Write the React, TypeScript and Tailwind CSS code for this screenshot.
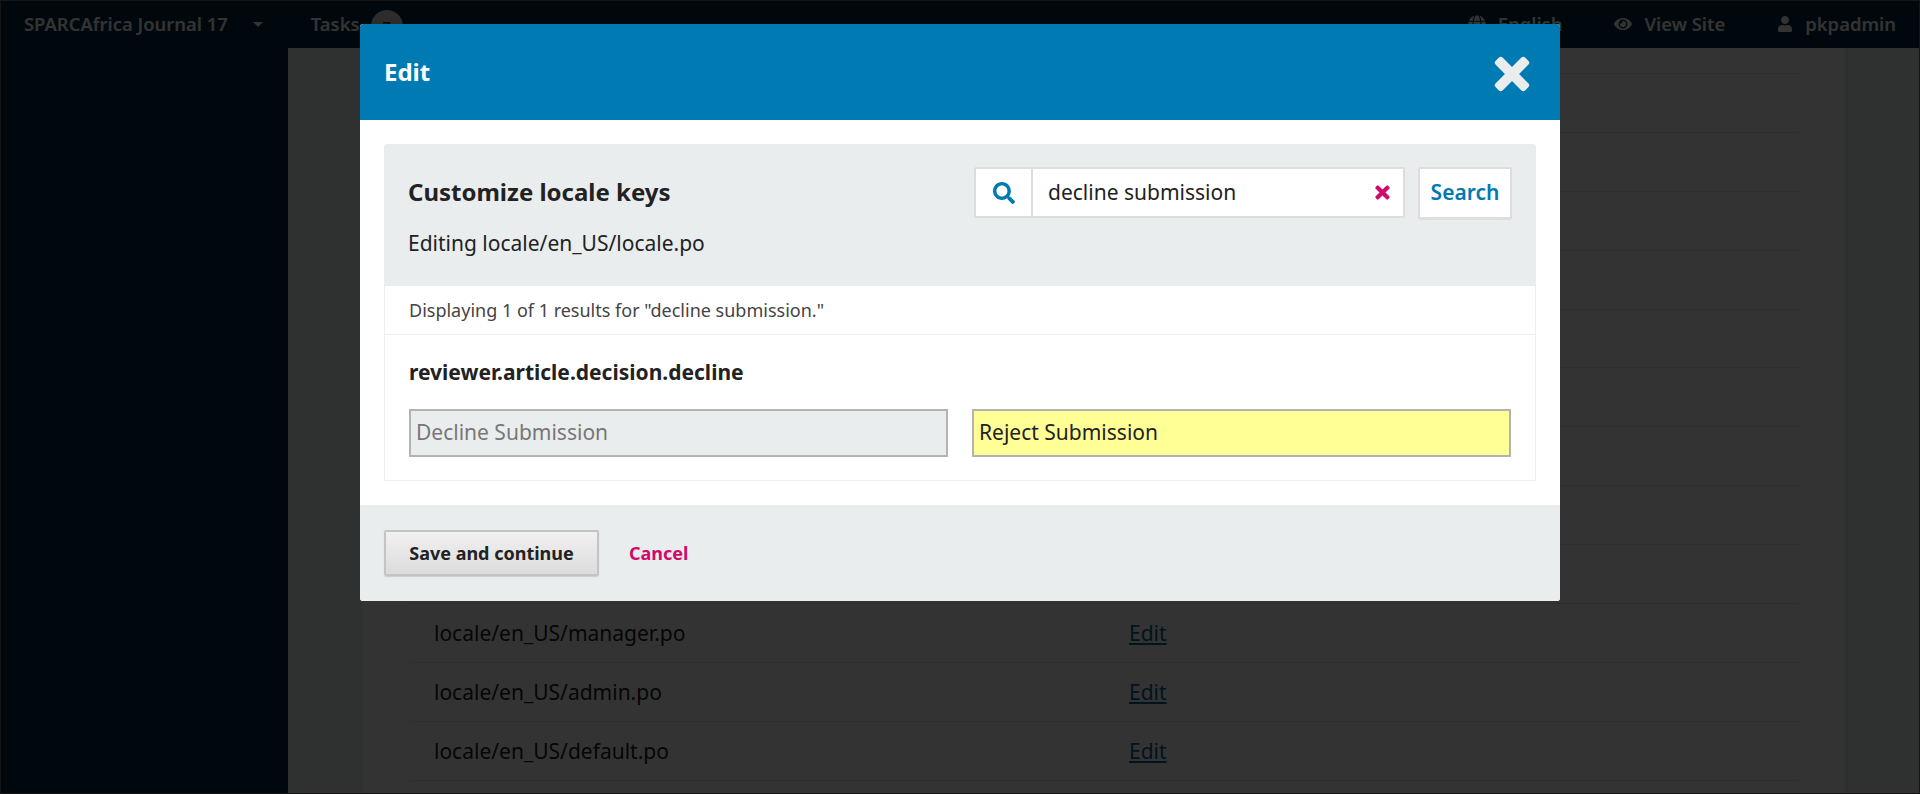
import { FaGlobe, FaEye, FaUser, FaSearch } from "react-icons/fa";

const rows: Record<number, string> = {
  9: "locale/en_US/manager.po",
  10: "locale/en_US/admin.po",
  11: "locale/en_US/default.po",
};

function Times({ className }: { className: string }) {
  return (
    <svg viewBox="0 0 24 24" className={className} fill="currentColor">
      <path d="M4.2 7.6a1.4 1.4 0 0 1 0-2l1.4-1.4a1.4 1.4 0 0 1 2 0L12 8.6l4.4-4.4a1.4 1.4 0 0 1 2 0l1.4 1.4a1.4 1.4 0 0 1 0 2L15.4 12l4.4 4.4a1.4 1.4 0 0 1 0 2l-1.4 1.4a1.4 1.4 0 0 1-2 0L12 15.4l-4.4 4.4a1.4 1.4 0 0 1-2 0l-1.4-1.4a1.4 1.4 0 0 1 0-2L8.6 12z" />
    </svg>
  );
}

export default function App() {
  return (
    <div className="relative h-[794px] w-[1920px] overflow-hidden bg-[#eaedee] font-['Noto_Sans',sans-serif] text-[#222]">
      <header className="flex h-12 items-center bg-[#002c40] pl-6 pr-6 text-[18.4px] font-semibold text-white">
        <span>SPARCAfrica Journal 17</span>
        <span className="ml-[25px] h-0 w-0 border-x-[5px] border-t-[5px] border-x-transparent border-t-white" />
        <span className="ml-[48px]">Tasks</span>
        <span className="ml-[11px] mt-1 flex h-8 w-8 items-center justify-center rounded-full bg-[#ddd] text-[14px] text-[#222]">7</span>
        <FaGlobe className="ml-auto h-[18px] w-[18px]" />
        <span className="ml-3">English</span>
        <FaEye className="ml-[51px] h-[18px] w-[18px]" />
        <span className="ml-[13px]">View Site</span>
        <FaUser className="ml-[52px] h-4 w-4" />
        <span className="ml-3">pkpadmin</span>
      </header>
      <div className="flex h-[746px]">
        <aside className="w-[288px] bg-[#002c40]" />
        <main className="flex-1 overflow-hidden pl-[74px] pr-[73px]">
          <div className="h-full border-r border-[#d8d8d8] bg-white pl-12 pr-[47px] pt-[25px]">
            <div className="border-t border-[#e6e6e6]">
              {Array.from({ length: 12 }).map((_, i) => (
                <div key={i} className="flex h-[58.9px] items-center border-b border-[#e6e6e6] px-6 pt-[2px]">
                  {rows[i] && <span className="w-[695px] text-[21px]">{rows[i]}</span>}
                  {rows[i] && <a className="text-[21px] text-[#006798] underline">Edit</a>}
                </div>
              ))}
            </div>
          </div>
        </main>
      </div>

      <div className="absolute inset-0 border border-[#151515] bg-black/80" />

      <div className="absolute left-[360px] top-6 w-[1200px] overflow-hidden rounded-[3px] bg-white">
        <div className="flex h-24 items-center justify-between bg-[#007ab2] pl-6 pr-[23px]">
          <h2 className="text-[24px] font-bold text-white">Edit</h2>
          <Times className="mt-[3px] h-[50px] w-[50px] text-[#eaedee]" />
        </div>
        <div className="p-6">
          <div className="h-[142px] rounded-t-[3px] bg-[#eaedee] pl-6 pr-6 pt-[23px]">
            <div className="flex items-center justify-between">
              <h3 className="-mt-[2px] text-[24px] font-bold leading-[32px]">Customize locale keys</h3>
              <div className="flex items-start">
                <div className="flex h-[51px] w-[431px] rounded-[2px] border-2 border-[#ddd] bg-white">
                  <span className="flex w-[57px] items-center justify-center border-r-2 border-[#ddd] text-[#007ab2]">
                    <FaSearch className="h-[22px] w-[22px]" />
                  </span>
                  <span className="flex flex-1 items-center justify-between pl-[15px] pr-[10px] text-[21px]">
                    decline submission
                    <Times className="h-[21px] w-[21px] text-[#d00a6c]" />
                  </span>
                </div>
                <button className="ml-[13px] h-[52px] w-[94px] rounded-[2px] border-2 border-[#ddd] bg-white text-[21px] font-semibold text-[#007ab2] shadow-[0_1px_0_#ddd]">Search</button>
              </div>
            </div>
            <p className="mt-[9px] text-[21px] leading-[30px]">Editing locale/en_US/locale.po</p>
          </div>
          <div className="flex h-[49px] items-center border-x border-b border-[#eee] px-6 text-[18px] text-[#444]">Displaying 1 of 1 results for "decline submission."</div>
          <div className="h-[146px] border-x border-b border-[#eee] px-6 pt-[21px]">
            <div className="text-[21px] font-bold leading-[32px]">reviewer.article.decision.decline</div>
            <div className="mt-[21px] flex gap-6">
              <div className="flex h-12 flex-1 items-center border-2 border-[#b3b3b3] bg-[#eaedee] px-[5px] text-[21px] text-[#777]">Decline Submission</div>
              <div className="flex h-12 flex-1 items-center border-2 border-[#b3b3b3] bg-[#ffff95] px-[5px] text-[21px] text-[#222]">Reject Submission</div>
            </div>
          </div>
        </div>
        <div className="flex h-[96px] items-center bg-[#eaedee] px-6">
          <button className="h-[46px] w-[215px] rounded-[2px] border-2 border-[#c4c4c4] bg-gradient-to-b from-[#f1f1f1] to-[#dcdcdc] text-[18px] font-bold shadow-[0_1px_1px_#ccc]">Save and continue</button>
          <a className="ml-[30px] text-[18px] font-bold text-[#d00a6c]">Cancel</a>
        </div>
      </div>
    </div>
  );
}
